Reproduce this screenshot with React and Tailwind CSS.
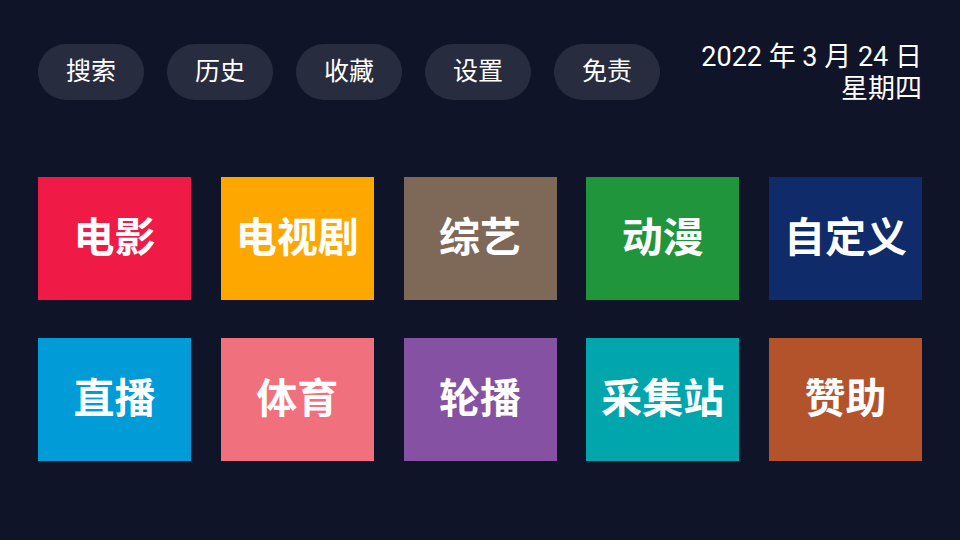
import React from 'react'

const navItems = ['搜索', '历史', '收藏', '设置', '免责']

const tiles = [
  { name: '电影', color: 'bg-[#ef1a46]' },
  { name: '电视剧', color: 'bg-[#fea700]' },
  { name: '综艺', color: 'bg-[#7e6858]' },
  { name: '动漫', color: 'bg-[#20953c]' },
  { name: '自定义', color: 'bg-[#0f2b69]' },
  { name: '直播', color: 'bg-[#019bd7]' },
  { name: '体育', color: 'bg-[#f0717d]' },
  { name: '轮播', color: 'bg-[#8451a3]' },
  { name: '采集站', color: 'bg-[#01a5ac]' },
  { name: '赞助', color: 'bg-[#b2532b]' }
]

export default function App () {
  return (
    <div className="w-[960px] h-[540px] bg-[#0f1428] text-white overflow-hidden font-['Roboto','Noto_Sans_CJK_SC',sans-serif]">
      {/* top bar */}
      <div className="flex items-start justify-between pl-[38px] pr-[38px] pt-[44px]">
        <div className="flex gap-[23px]">
          {navItems.map(item => (
            <button key={item} className="w-[106px] h-[56px] rounded-full bg-[#282c3f] text-[25px] text-white flex items-center justify-center">
              {item}
            </button>
          ))}
        </div>
        <div className="text-right text-[27px] leading-[32px] -mt-[3px]">
          <div>2022 年 3 月 24 日</div>
          <div>星期四</div>
        </div>
      </div>

      {/* tiles */}
      <div className="grid grid-cols-[repeat(5,153px)] gap-x-[29.75px] gap-y-[38px] pl-[38px] mt-[72px]">
        {tiles.map(t => (
          <div key={t.name} className={`${t.color} h-[123px] flex items-center justify-center text-[41px] font-bold`}>
            {t.name}
          </div>
        ))}
      </div>
    </div>
  )
}
